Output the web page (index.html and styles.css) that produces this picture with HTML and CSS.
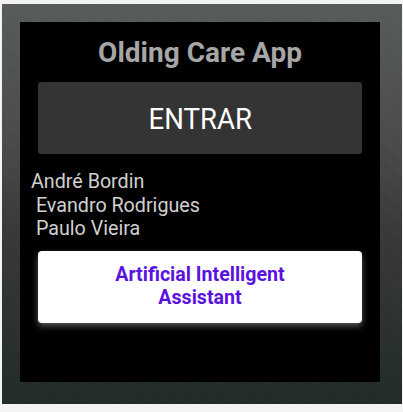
FILE: index.html
```html
<!DOCTYPE html>
<html>
<head>
<meta charset="utf-8">
<link rel="stylesheet" href="styles.css">
</head>
<body>
<div class="frame">
  <div class="screen">
    <h1 class="title">Olding Care App</h1>
    <button class="btn-enter"><span class="enter-label">ENTRAR</span></button>
    <div class="names">André Bordin<br>&nbsp;Evandro Rodrigues<br>&nbsp;Paulo Vieira</div>
    <button class="btn-ai">Artificial Intelligent<br>Assistant</button>
  </div>
</div>
</body>
</html>
```
FILE: styles.css
```css
html, body {
  margin: 0;
  padding: 0;
  background: #f3f3f3;
}
body {
  font-family: Roboto, "Noto Sans", sans-serif;
  width: 403px;
  height: 412px;
  overflow: hidden;
}
.frame {
  margin: 4px 1px 0 2px;
  width: 400px;
  height: 400px;
  box-sizing: border-box;
  padding: 18px 22px 22px 18px;
  background:
    repeating-linear-gradient(45deg, rgba(255,255,255,0.02) 0 1px, rgba(0,0,0,0.025) 1px 2px),
    linear-gradient(180deg, #575c5b 0%, #4a4a4b 35%, #3b383a 55%, #2c3131 78%, #1f2a29 100%);
}
.screen {
  background: #000;
  height: 360px;
  display: flex;
  flex-direction: column;
  padding: 0 18px;
  box-sizing: border-box;
}
.title {
  margin: 15px 0 0;
  height: 45px;
  text-align: center;
  font-size: 28px;
  font-weight: 700;
  color: #a6a6a6;
  line-height: 32px;
}
.btn-enter {
  height: 72px;
  border: none;
  border-radius: 3px;
  background: #343434;
  color: #fff;
  font-family: Roboto, sans-serif;
  font-size: 30px;
  font-weight: 400;
  padding: 0;
}
.enter-label {
  display: inline-block;
  transform: scaleX(0.92);
}
.names {
  margin: 16px 0 0 -7px;
  font-size: 19.7px;
  line-height: 23.5px;
  color: #d0d0d0;
}
.btn-ai {
  margin-top: 10px;
  height: 72px;
  border: none;
  border-radius: 4px;
  background: #fff;
  color: #5a12e0;
  font-family: Roboto, sans-serif;
  font-size: 19.6px;
  font-weight: 700;
  line-height: 23.5px;
  padding: 0 0 1px;
  box-shadow: 0 3px 6px rgba(255,255,255,0.35);
}
```
